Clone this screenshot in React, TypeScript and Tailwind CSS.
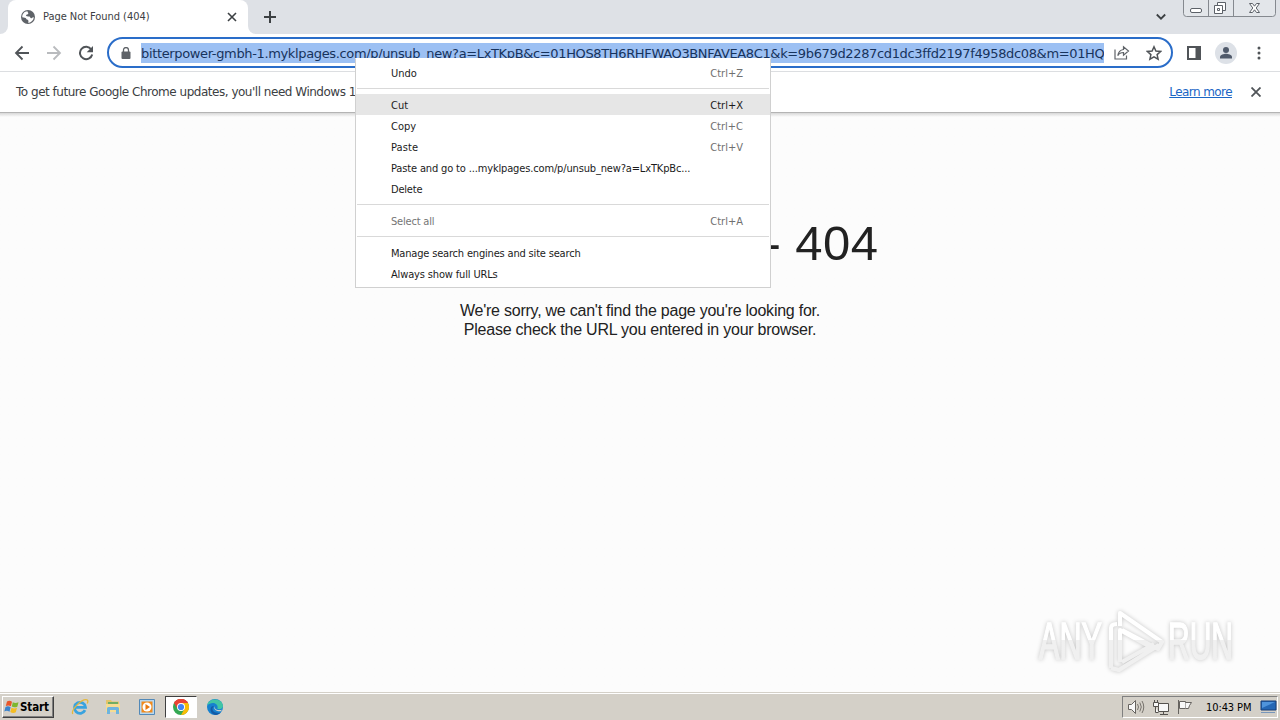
import React from "react";

const TAHOMA = "font-['DejaVu_Sans_Condensed','DejaVu_Sans',sans-serif]";

type Item = { label: string; keys?: string; state?: "active" | "disabled"; track: string };

const groups: Item[][] = [
  [{ label: "Undo", keys: "Ctrl+Z", track: "" }],
  [
    { label: "Cut", keys: "Ctrl+X", state: "active", track: "" },
    { label: "Copy", keys: "Ctrl+C", track: "" },
    { label: "Paste", keys: "Ctrl+V", track: "tracking-[0.1px]" },
    { label: "Paste and go to ...myklpages.com/p/unsub_new?a=LxTKpBc...", track: "tracking-[-0.15px]" },
    { label: "Delete", track: "tracking-[-0.2px]" },
  ],
  [{ label: "Select all", keys: "Ctrl+A", state: "disabled", track: "tracking-[-0.2px]" }],
  [
    { label: "Manage search engines and site search", track: "tracking-[-0.18px]" },
    { label: "Always show full URLs", track: "tracking-[-0.15px]" },
  ],
];

function TabStrip() {
  return (
    <div className="flex h-[34px] shrink-0 bg-[#dee1e6] text-[#3c4043]">
      <div className="flex w-2 items-end bg-white">
        <div className="h-full w-2 rounded-br-lg bg-[#dee1e6]" />
      </div>
      <div className="flex bg-white">
        <div className="flex h-[34px] w-60 items-center bg-[#dee1e6]">
          <div className="flex h-full w-full items-center rounded-t-lg bg-white pl-3 pr-[11px]">
            <svg width="16" height="16" viewBox="0 0 16 16">
              <circle cx="8" cy="8" r="7" fill="#5f6368" />
              <path d="M7.500 2.200c-.2 1.400 1.200 1.200.8 2.300C7.800 5.700 6.300 5.200 6 6.500c-.3 1 2.100.900 3.300 1.100 1.100.2.900 2 2.200 1.700.8-.2 1.300-1.300 2.300-.8-.3 2.700-2.600 5-5.200 5.400-.8-.8.3-1.700-.3-2.500-.6-.9-2-.5-2.200-1.800C5.900 8.600 4 8.500 2.300 8.200 1.900 5.100 4.600 2 7.500 2.200z" fill="#fff" />
            </svg>
            <span className="ml-[7px] grow whitespace-nowrap text-[11px] leading-4 tracking-[-0.05px]">Page Not Found (404)</span>
            <svg width="10" height="10" viewBox="0 0 10 10" stroke="#3c4043" strokeWidth="1.6"><path d="M1 1l8 8M9 1L1 9" /></svg>
          </div>
        </div>
      </div>
      <div className="flex w-2 bg-white"><div className="h-full w-2 rounded-bl-lg bg-[#dee1e6]" /></div>
      <svg className="ml-2 mt-[11px]" width="12" height="12" viewBox="0 0 12 12" stroke="#3c4043" strokeWidth="2"><path d="M6 0v12M0 6h12" /></svg>
      <div className="grow" />
      <svg className="mr-[17px] mt-[13px]" width="10" height="8" viewBox="0 0 10 8" fill="none" stroke="#3c4043" strokeWidth="1.8"><path d="M.8 1.500L5 5.700l4.200-4.200" /></svg>
      <svg className="mr-[4px]" width="93" height="17" viewBox="0 0 93 17" fill="none" stroke="#85898f">
        <path d="M.5 0v13.500q0 3 3 3h86q3 0 3-3V0M25.500 0v16M50.500 0v16" fill="#e3e6ea" />
        <rect x="7.500" y="8.500" width="11" height="4" rx="1.500" fill="#fff" stroke="#5c6168" />
        <path d="M34.500 2.500h8v8h-8z" fill="#fff" stroke="#5c6168" />
        <path d="M31.500 5.500h8v8h-8z" fill="#fff" stroke="#5c6168" />
        <path d="M34.500 8.500h2v2h-2z" stroke="#5c6168" />
        <path d="M66.500 3.500h3l2 2.700 2-2.700h3l-3.300 4.500 3.300 4.500h-3l-2-2.700-2 2.700h-3l3.300-4.500z" fill="#fff" stroke="#5c6168" />
      </svg>
    </div>
  );
}

function Toolbar() {
  return (
    <div className="flex h-[38px] shrink-0 items-center border-b border-[#dcdee1] bg-white text-[#5f6368]">
      <svg className="ml-[14px]" width="16" height="16" viewBox="0 0 16 16" fill="none" stroke="#505458" strokeWidth="1.800"><path d="M15 8H2M8.500 1.500L2 8l6.500 6.500" /></svg>
      <svg className="ml-4" width="16" height="16" viewBox="0 0 16 16" fill="none" stroke="#b9bbbe" strokeWidth="1.800"><path d="M1 8h13M7.500 1.500L14 8l-6.500 6.500" /></svg>
      <svg className="ml-4" width="16" height="16" viewBox="0 0 16 16" fill="none" stroke="#505458" strokeWidth="2"><path d="M13.300 4.500A6.200 6.200 0 1 0 14.200 9.500" /><path d="M15 1v6.300H8.700z" fill="#505458" stroke="none" /></svg>
      <div className="ml-[13px] flex h-[31px] w-[1066px] items-center rounded-full border-2 border-[#2a6dc9] bg-white">
        <svg className="ml-[12px]" width="10" height="12" viewBox="0 0 10 12"><rect x=".5" y="4.500" width="9" height="7.500" rx="1" fill="#5f6368" /><path d="M2.500 5V3a2.500 2.500 0 0 1 5 0v2" fill="none" stroke="#5f6368" strokeWidth="1.300" /></svg>
        <div className="ml-[10px] h-5 w-[963px] overflow-hidden whitespace-nowrap bg-[#9cc0f3] font-['DejaVu_Sans',sans-serif] text-[13px] leading-[22px] tracking-[-0.355px] text-[#17335c]">
          bitterpower-gmbh-1.myklpages.com/p/unsub_new?a=LxTKpB&amp;c=01HQS8TH6RHFWAQ3BNFAVEA8C1&amp;k=9b679d2287cd1dc3ffd2197f4958dc08&amp;m=01HQ
        </div>
        <svg className="ml-[10px]" width="16" height="16" viewBox="0 0 16 16" fill="none" stroke="#5f6368" strokeWidth="1.200"><path d="M1 4.500v9.500h11.500v-3.500" /><path d="M9.500 4.500V1.700l5 4.300-5 4.300V7.500C6.500 7.500 5 8.500 3.800 10.600 4.300 7.300 6 4.900 9.500 4.500z" /></svg>
        <svg className="ml-4" width="16" height="16" viewBox="0 0 16 16" fill="none" stroke="#505458" strokeWidth="1.500"><path d="M8 1.800l1.900 4.300 4.700.4-3.500 3.100 1 4.600L8 11.800l-4.100 2.400 1-4.600L1.400 6.500l4.700-.4z" /></svg>
      </div>
      <svg className="ml-[14px]" width="14" height="14" viewBox="0 0 14 14"><path d="M0 0h14v14H0z" fill="#505458" /><path d="M2 2h6.500v10H2z" fill="#fff" /></svg>
      <svg className="ml-[14px]" width="22" height="22" viewBox="0 0 22 22"><circle cx="11" cy="11" r="11" fill="#dde1e7" /><circle cx="11" cy="8" r="3" fill="#505a6b" /><path d="M5 16.500v-1.500c0-2.200 4-3.200 6-3.200s6 1 6 3.200v1.500z" fill="#505a6b" /></svg>
      <svg className="ml-[20px]" width="4" height="14" viewBox="0 0 4 14" fill="#505458"><circle cx="2" cy="2" r="1.500" /><circle cx="2" cy="7" r="1.500" /><circle cx="2" cy="12" r="1.500" /></svg>
    </div>
  );
}

function InfoBar() {
  return (
    <div className="flex h-10 shrink-0 items-center bg-white pl-4 pr-[19px] font-['DejaVu_Sans',sans-serif] text-[12px] text-[#3c4043]">
      <span className="w-[600px] whitespace-nowrap tracking-[-0.48px]">To get future Google Chrome updates, you'll need Windows 10 or later.</span>
      <div className="grow" />
      <span className="whitespace-nowrap tracking-[-0.57px] text-[#1a66c5] underline">Learn more</span>
      <svg className="ml-[19px]" width="10" height="10" viewBox="0 0 10 10" stroke="#505458" strokeWidth="1.800"><path d="M.5.5l9 9M9.500.5l-9 9" /></svg>
    </div>
  );
}

function ContextMenu() {
  return (
    <div className="absolute left-[355px] top-[58px] w-[416px] border border-t-white border-[#d0d0d0] bg-white pb-[3px] pt-[3px] text-[11px] text-[#1b1b1b]">
      {groups.map((g, i) => (
        <React.Fragment key={i}>
          {i > 0 && <div className="mx-px my-[5px] h-px bg-[#d9d9d9]" />}
          {g.map((it) => (
            <div key={it.label} className={`flex h-[21px] items-center justify-between whitespace-nowrap pl-[35px] pr-[27px] pt-[3px] ${it.state === "active" ? "bg-[#e6e6e6]" : it.state === "disabled" ? "text-[#757575]" : ""}`}>
              <span className={it.track}>{it.label}</span>
              {it.keys && <span className={it.state === "active" ? "" : "text-[#707070]"}>{it.keys}</span>}
            </div>
          ))}
        </React.Fragment>
      ))}
    </div>
  );
}

function Watermark() {
  return (
    <svg className="absolute left-[1030px] top-[600px] [filter:drop-shadow(0_0_2px_rgba(0,0,0,0.22))]" width="212" height="80" viewBox="0 0 212 80">
      <defs>
        <linearGradient id="wm" x1="0" y1="0" x2="0" y2="80" gradientUnits="userSpaceOnUse"><stop offset=".5" stopColor="#ffffff" /><stop offset=".5" stopColor="#f0f0f0" /></linearGradient>
      </defs>
      <g fill="url(#wm)" fontFamily="'Liberation Sans Narrow','Liberation Sans',sans-serif" fontSize="52" fontWeight="400" stroke="url(#wm)" strokeWidth="1.500">
        <text x="9" y="59" textLength="63" lengthAdjust="spacingAndGlyphs">ANY</text>
        <text x="138" y="59" textLength="65" lengthAdjust="spacingAndGlyphs">RUN</text>
      </g>
      <g fill="none" stroke="url(#wm)" strokeWidth="4" strokeLinejoin="round">
        <path d="M90 62V30l34 19" />
        <path d="M81 68V28q0-4 6-4M90 26V13l42 29-4 7-36-19M92 62l32-18M81 68l8 2 40-25" />
      </g>
    </svg>
  );
}

function Taskbar() {
  return (
    <div className="flex h-7 shrink-0 items-center border-t border-[#d4d0c8] bg-[#d4d0c8] pl-0.5 pr-0.5 shadow-[inset_0_1px_0_#fff]">
      <div className="flex h-[22px] w-[52px] items-center border border-b-[#404040] border-l-white border-r-[#404040] border-t-white pl-px shadow-[inset_-1px_-1px_0_#808080]">
        <svg className="shrink-0" width="16" height="16" viewBox="0 0 16 16"><path d="M3 2.500q2.500-1.500 5 .3L6.900 7.300Q4.500 5.700 1.800 7z" fill="#e8562a" /><path d="M8.800 3.200q2.500 1.500 5.700 0L13.300 7.700q-3 1.300-5.500-.1z" fill="#7db72f" /><path d="M1.500 8q2.700-1.400 5.100.3L5.500 12.700Q3 11 .3 12.400z" fill="#3a83cc" /><path d="M7.500 8.700q2.700 1.400 5.500.1l-1.200 4.500q-2.700 1.400-5.500-.3z" fill="#f5bd22" /></svg>
        <span className="text-[11.5px] font-bold leading-4 tracking-[-0.1px] text-black">Start</span>
      </div>
      <svg className="ml-[17px]" width="18" height="18" viewBox="0 0 18 18" fill="none"><path d="M14 12.200A5.500 5.500 0 1 1 14.500 9.300H4.500" stroke="#39a3df" strokeWidth="2.800" /><path d="M1.800 16C-.5 12 11 .3 16 1.800c1.200.5 1 2.200.2 3.700" stroke="#e5b83b" strokeWidth="1.300" /></svg>
      <svg className="ml-[16px]" width="16" height="16" viewBox="0 0 16 16"><path d="M1 1h5l1 1.500h7V12H1z" fill="#e3c56a" /><path d="M3 3h10v2H3z" fill="#70ad62" /><path d="M1 5h14v8H1z" fill="#f5dc92" /><path d="M2 15V9.500q0-1.500 1.500-1.500h9q1.500 0 1.500 1.500V15h-3v-4H5v4z" fill="#6db4de" /></svg>
      <svg className="ml-[18px]" width="16" height="16" viewBox="0 0 16 16"><path d="M.5.5h15v15H.5z" fill="#b8d8f0" stroke="#5289b8" /><path d="M2.500 2.500h11v11h-11z" fill="#f18a1c" /><circle cx="8" cy="8" r="4.500" fill="#fff" /><path d="M6.500 5L11 8l-4.500 3z" fill="#e87810" /></svg>
      <div className="ml-[10px] flex h-[22px] w-8 items-center justify-center border border-b-white border-l-[#404040] border-r-white border-t-[#404040] bg-white">
        <svg width="16" height="16" viewBox="0 0 16 16"><circle cx="8" cy="8" r="8" fill="#34a853" /><path d="M1.070 4A8 8 0 0 1 14.930 4L8 8z" fill="#ea4335" /><path d="M14.930 4A8 8 0 0 1 8 16l3.460-6L8 4z" fill="#fbbc05" /><path d="M1.070 4A8 8 0 0 1 14.930 4H8L4.600 10z" fill="#ea4335" /><circle cx="8" cy="8" r="4" fill="#fff" /><circle cx="8" cy="8" r="3.100" fill="#4285f4" /></svg>
      </div>
      <svg className="ml-[10px]" width="16" height="16" viewBox="0 0 16 16"><circle cx="8" cy="8" r="8" fill="#1681cf" /><path d="M.3 6C1.500-1.500 15.500-1.500 16 7c0 2.800-3.400 3.900-5.700 2.700 1.600-3.400-2.800-7.200-7.500-4.900Q1 5.500.3 6z" fill="#41c5a5" /><path d="M7 7c-4 4 .4 8 6.500 6.800-4 4-9.500 1.800-10-3C3.500 8 5 7 7 7z" fill="#145aa5" /><path d="M8 7.200c-1 2.300 1.500 4.800 6.800 3.600L14 12.200C9 13 5.800 9.500 8 7.200z" fill="#d4d0c8" /></svg>
      <div className="grow" />
      <div className="flex h-[22px] w-[156px] items-center border border-b-white border-l-[#808080] border-r-white border-t-[#808080] pl-[5px]">
        <svg className="shrink-0" width="17" height="16" viewBox="0 0 17 16" fill="#f8f8f8" stroke="#66635f"><path d="M.5 5.500h3l4-4v13l-4-4h-3z" /><path d="M9.500 5q2 3 0 6M11.800 3.500q3 4.500 0 9M14 2q3.500 6 0 12" fill="none" stroke="#77736d" /></svg>
        <svg className="ml-[8px] shrink-0" width="17" height="16" viewBox="0 0 17 16" fill="#f8f8f8" stroke="#55524e"><path d="M5.500 4.500h10v8h-10zM7 15.500h8M10.500 13v2" /><path d="M.5 3.500h5v4h-5zM1.500 1v2M4.500 1v2M2.500 8v5.500h3" /></svg>
        <svg className="ml-[7px] shrink-0" width="16" height="16" viewBox="0 0 16 16" fill="#f8f8f8" stroke="#66635f"><path d="M1.500 1v14" /><path d="M2.500 2.500h6v7h-6z" /><path d="M8.500 3.500h6l-2 3 -1 3h-3" /></svg>
        <span className="ml-[13px] w-[45px] whitespace-nowrap pt-0.5 text-[11px] leading-4 tracking-[-0.1px] text-black">10:43 PM</span>
        <svg className="ml-[9px] shrink-0" width="17" height="14" viewBox="0 0 17 14"><path d="M1 1h15v9H1z" fill="#2467b5" stroke="#173f78" /><path d="M2 2h13L2 8z" fill="#4f94dc" /><path d="M1 12.500h14" stroke="#7796bb" /></svg>
      </div>
    </div>
  );
}

export default function App() {
  return (
    <div className={`relative flex h-[720px] w-[1280px] flex-col overflow-hidden bg-[#fcfcfc] ${TAHOMA}`}>
      <TabStrip />
      <Toolbar />
      <InfoBar />
      <main className="grow border-t border-[#b4b4b4] bg-linear-to-b from-[#d8d8d8] to-[#fcfcfc] to-[4px] text-center font-['Liberation_Sans',sans-serif] text-[#222]">
        <h1 className="mt-[102px] pr-[15px] text-[49px] leading-[56px] tracking-[0.5px]">Page Not Found - 404</h1>
        <p className="mt-[30px] text-[16px] leading-[19px] tracking-[-0.24px]">We're sorry, we can't find the page you're looking for.<br />Please check the URL you entered in your browser.</p>
      </main>
      <Taskbar />
      <ContextMenu />
      <Watermark />
    </div>
  );
}
